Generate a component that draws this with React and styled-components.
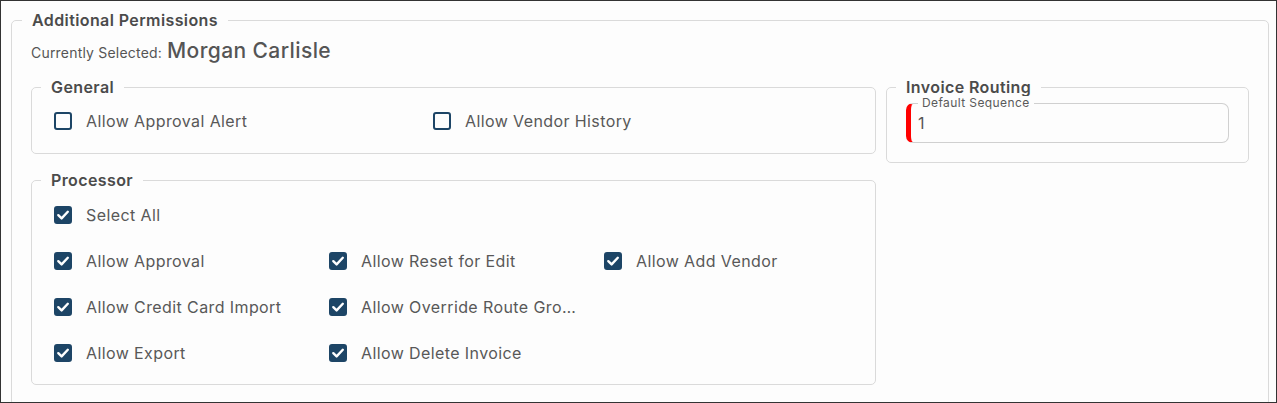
import React from 'react';
import styled, { createGlobalStyle } from 'styled-components';

const GlobalStyle = createGlobalStyle`
  * { box-sizing: border-box; }
  body {
    margin: 0;
    font-family: Inter, "Noto Sans", "Liberation Sans", sans-serif;
    letter-spacing: 0.4px;
    background: #fdfdfd;
  }
`;

const Frame = styled.div`
  width: 1277px;
  height: 403px;
  border: 1px solid #333;
  background: #fdfdfd;
  padding: 9px 7px 0 10px;
  overflow: hidden;
`;

const Section = styled.fieldset`
  margin: 0;
  min-width: 0;
  border: 1px solid #dadada;
  border-radius: 5px;
  padding: 0 ${p => p.$x}px ${p => p.$bottom}px;
`;

const Legend = styled.legend`
  padding: 0 10px;
  font-size: 16px;
  line-height: 20px;
  font-weight: 600;
  color: #4b4b4b;
`;

const Body = styled.div`
  padding: 0 9px;
`;

const SelectedRow = styled.div`
  display: flex;
  align-items: baseline;
  gap: 5px;
  margin-top: 7px;
  margin-bottom: 10px;
  color: #555;
  line-height: 28px;
`;

const SelectedLabel = styled.span`
  font-size: 14px;
  letter-spacing: 0.2px;
`;

const SelectedName = styled.span`
  font-size: 21px;
  font-weight: 500;
  letter-spacing: 0.4px;
`;

const Columns = styled.div`
  display: grid;
  grid-template-columns: minmax(0, 1fr) 363px;
  gap: 10px;
  align-items: start;
`;

const Stack = styled.div`
  display: flex;
  flex-direction: column;
  gap: 16px;
  min-width: 0;
`;

const OptionGrid = styled.div`
  display: grid;
  grid-template-columns: repeat(${p => p.$cols}, ${p => p.$width}px);
  row-gap: 22px;
  margin: ${p => p.$top}px 0 0 13px;
`;

const Option = styled.label`
  display: flex;
  align-items: center;
  gap: 14px;
  height: 24px;
  min-width: 0;
  padding-right: 24px;
  grid-column: ${p => (p.$full ? '1 / -1' : 'auto')};
  cursor: pointer;
`;

const Box = styled.span`
  flex: none;
  width: 18px;
  height: 18px;
  border-radius: 3px;
  border: 2px solid #1d4566;
  background: ${p => (p.$checked ? '#1d4566' : 'transparent')};
  display: flex;
  align-items: center;
  justify-content: center;
`;

const OptionText = styled.span`
  font-size: 16px;
  color: #585858;
  white-space: nowrap;
  overflow: hidden;
  text-overflow: ellipsis;
`;

const Field = styled.div`
  position: relative;
  margin: 6px 10px 0;
  height: 40px;
  border: 1px solid #d0d0d0;
  border-left: 5px solid #ff0000;
  border-radius: 7px;
  display: flex;
  align-items: center;
  padding-left: 7px;
`;

const FieldLabel = styled.span`
  position: absolute;
  top: -8px;
  left: 7px;
  padding: 0 4px;
  background: #fdfdfd;
  font-size: 12px;
  line-height: 14px;
  color: #5a5a5a;
`;

const FieldValue = styled.span`
  font-size: 16px;
  color: #555;
`;

const Check = () => (
  <svg width="14" height="14" viewBox="0 0 14 14">
    <path d="M2.3 7.2 L5.6 10.4 L11.8 3.8" fill="none" stroke="#fff" strokeWidth="2.4" strokeLinecap="round" strokeLinejoin="round" />
  </svg>
);

const CheckOption = ({ label, checked, full }) => (
  <Option $full={full}>
    <Box $checked={checked}>{checked && <Check />}</Box>
    <OptionText title={label}>{label}</OptionText>
  </Option>
);

const processorOptions = [
  'Allow Approval',
  'Allow Reset for Edit',
  'Allow Add Vendor',
  'Allow Credit Card Import',
  'Allow Override Route Group',
  null,
  'Allow Export',
  'Allow Delete Invoice',
];

export default function App() {
  return (
    <>
      <GlobalStyle />
      <Frame>
        <Section $x={10} $bottom={20}>
          <Legend>Additional Permissions</Legend>
          <Body>
            <SelectedRow>
              <SelectedLabel>Currently Selected:</SelectedLabel>
              <SelectedName>Morgan Carlisle</SelectedName>
            </SelectedRow>
            <Columns>
              <Stack>
                <Section $x={9} $bottom={20}>
                  <Legend>General</Legend>
                  <OptionGrid $cols={2} $width={379} $top={12}>
                    <CheckOption label="Allow Approval Alert" />
                    <CheckOption label="Allow Vendor History" />
                  </OptionGrid>
                </Section>
                <Section $x={9} $bottom={19}>
                  <Legend>Processor</Legend>
                  <OptionGrid $cols={3} $width={275} $top={13}>
                    <CheckOption label="Select All" checked full />
                    {processorOptions.map((label, i) =>
                      label ? <CheckOption key={i} label={label} checked /> : <span key={i} />
                    )}
                  </OptionGrid>
                </Section>
              </Stack>
              <Section $x={9} $bottom={19}>
                <Legend>Invoice Routing</Legend>
                <Field>
                  <FieldLabel>Default Sequence</FieldLabel>
                  <FieldValue>1</FieldValue>
                </Field>
              </Section>
            </Columns>
          </Body>
        </Section>
      </Frame>
    </>
  );
}
